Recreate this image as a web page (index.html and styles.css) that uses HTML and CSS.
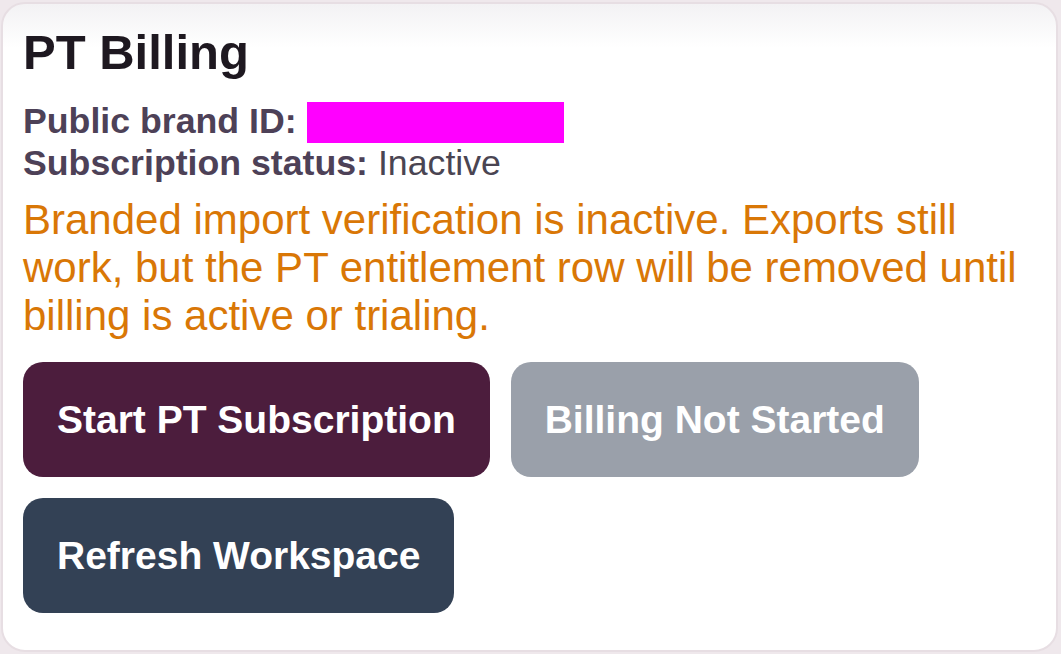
FILE: index.html
```html
<!DOCTYPE html>
<html lang="en">
<head>
  <meta charset="UTF-8" />
  <meta name="viewport" content="width=device-width, initial-scale=1.0" />
  <title>PT Billing</title>
  <link rel="stylesheet" href="styles.css">
</head>
<body>

<div class="billing-card">
  <h2 class="billing-title">PT Billing</h2>

  <div class="billing-meta">
    <div><strong>Public brand ID:</strong> <span class="redacted"></span></div>
    <div><strong>Subscription status:</strong> Inactive</div>
  </div>

  <p class="billing-warning">
    Branded import verification is inactive. Exports still work, but the PT entitlement row will be removed until billing is active or trialing.
  </p>

  <div class="billing-actions">
    <button class="btn btn-primary">Start PT Subscription</button>
    <button class="btn btn-disabled" disabled>Billing Not Started</button>
    <button class="btn btn-dark">Refresh Workspace</button>
  </div>
</div>

</body>
</html>
```

FILE: styles.css
```css
body {
  font-family: "Liberation Sans", Arial, sans-serif;
  background-color: #efe8ec;
  margin: 0;
  padding: 2px 3px 2px 1px;
  height: 100vh;
  box-sizing: border-box;
}

.billing-card {
  height: 100%;
  box-sizing: border-box;
  background: linear-gradient(#f3f2f4, #ffffff 44px);
  border: 2px solid #e7dee3;
  border-radius: 24px;
  padding: 20px;
}

.billing-title {
  font-size: 49px;
  font-weight: bold;
  color: #1e1820;
  margin: 0 0 21px;
}

.billing-meta {
  font-size: 35.7px;
  line-height: 41px;
  color: #4a4552;
}

.billing-meta strong {
  color: #4d4157;
}

.redacted {
  display: inline-block;
  width: 257px;
  height: 41px;
  background: #ff00ff;
  vertical-align: -10px;
}

.billing-warning {
  font-size: 42px;
  line-height: 48px;
  color: #d97706;
  margin: 12px 0 22px;
}

.billing-actions {
  display: flex;
  flex-wrap: wrap;
  gap: 21px;
  max-width: 920px;
}

.btn {
  font-family: inherit;
  font-size: 39px;
  font-weight: bold;
  color: #ffffff;
  border: none;
  border-radius: 20px;
  padding: 35.5px 34px;
  cursor: pointer;
}

.btn-primary {
  background-color: #4c1d3d;
}

.btn-disabled {
  background-color: #9aa0aa;
  cursor: default;
}

.btn-dark {
  background-color: #334155;
}
```
